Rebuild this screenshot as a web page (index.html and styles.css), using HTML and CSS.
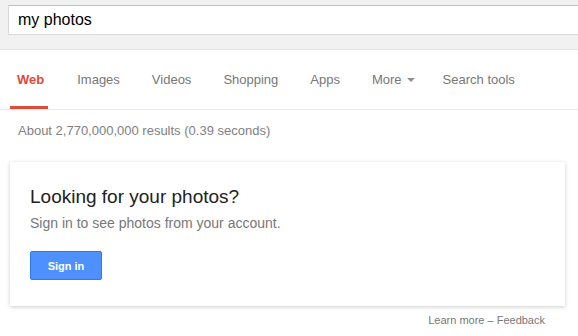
FILE: index.html
```html
<!DOCTYPE html>
<html>
<head>
<meta charset="utf-8">
<link rel="stylesheet" href="styles.css">
</head>
<body>
<div class="page">
  <header class="topbar">
    <div class="searchbox">my photos</div>
  </header>
  <nav class="tabs">
    <span class="tab active">Web</span>
    <span class="tab">Images</span>
    <span class="tab">Videos</span>
    <span class="tab">Shopping</span>
    <span class="tab">Apps</span>
    <span class="tab more">More<span class="caret"></span></span>
    <span class="tab tools">Search tools</span>
  </nav>
  <div class="stats">About 2,770,000,000 results (0.39 seconds)</div>
  <section class="card">
    <h2 class="card-title">Looking for your photos?</h2>
    <p class="card-text">Sign in to see photos from your account.</p>
    <button class="signin">Sign in</button>
  </section>
  <div class="footer-links">Learn more – Feedback</div>
</div>
</body>
</html>
```

FILE: styles.css
```css
* { box-sizing: border-box; }
html, body {
  margin: 0;
  padding: 0;
  background: #fff;
  overflow: hidden;
}
body {
  font-family: Arial, "Liberation Sans", sans-serif;
  width: 578px;
  height: 336px;
}
.page { width: 578px; }

.topbar {
  height: 50px;
  background: #f1f1f1;
  border-bottom: 1px solid #e5e5e5;
  padding: 5px 0 0 8px;
  overflow: hidden;
}
.searchbox {
  width: 640px;
  height: 30px;
  background: #fff;
  border: 1px solid #d9d9d9;
  border-top-color: #c0c0c0;
  font-size: 16px;
  line-height: 18px;
  color: #000;
  padding: 5px 0 0 9px;
}

.tabs {
  display: flex;
  height: 60px;
  padding-left: 10px;
  gap: 18px;
  border-bottom: 1px solid #ebebeb;
}
.tab {
  display: flex;
  align-items: flex-start;
  padding: 22px 7px 0;
  font-size: 13px;
  line-height: 16px;
  color: #777;
  border-bottom: 3px solid transparent;
  white-space: nowrap;
}
.tab.active {
  color: #dd4b39;
  font-weight: bold;
  border-bottom-color: #dd4b39;
  padding-left: 7px;
  padding-right: 4px;
  margin-right: 4px;
}
.caret {
  display: inline-block;
  width: 0;
  height: 0;
  margin: 6px 0 0 5px;
  border-left: 4px solid transparent;
  border-right: 4px solid transparent;
  border-top: 4px solid #909090;
}
.tab.tools { margin-left: -4px; }

.stats {
  font-size: 13px;
  line-height: 16px;
  color: #808080;
  padding: 13px 0 0 18px;
  height: 52px;
}

.card {
  margin-left: 10px;
  width: 555px;
  height: 144px;
  background: #fff;
  box-shadow: 0 1px 4px rgba(0, 0, 0, 0.2);
  padding: 24px 20px 0 20px;
}
.card-title {
  margin: 0;
  font-size: 19px;
  font-weight: normal;
  line-height: 22px;
  color: #222;
}
.card-text {
  margin: 6px 0 0;
  font-size: 14px;
  line-height: 18px;
  color: #777;
}
.signin {
  display: block;
  margin-top: 19px;
  width: 72px;
  height: 29px;
  background: #4d90fe;
  border: 1px solid #3079ed;
  border-radius: 2px;
  color: #fff;
  font-family: Arial, "Liberation Sans", sans-serif;
  font-size: 11px;
  font-weight: bold;
  padding: 0;
}

.footer-links {
  width: 565px;
  text-align: right;
  padding: 7px 20px 0 0;
  font-size: 11px;
  line-height: 14px;
  color: #777;
}
```
